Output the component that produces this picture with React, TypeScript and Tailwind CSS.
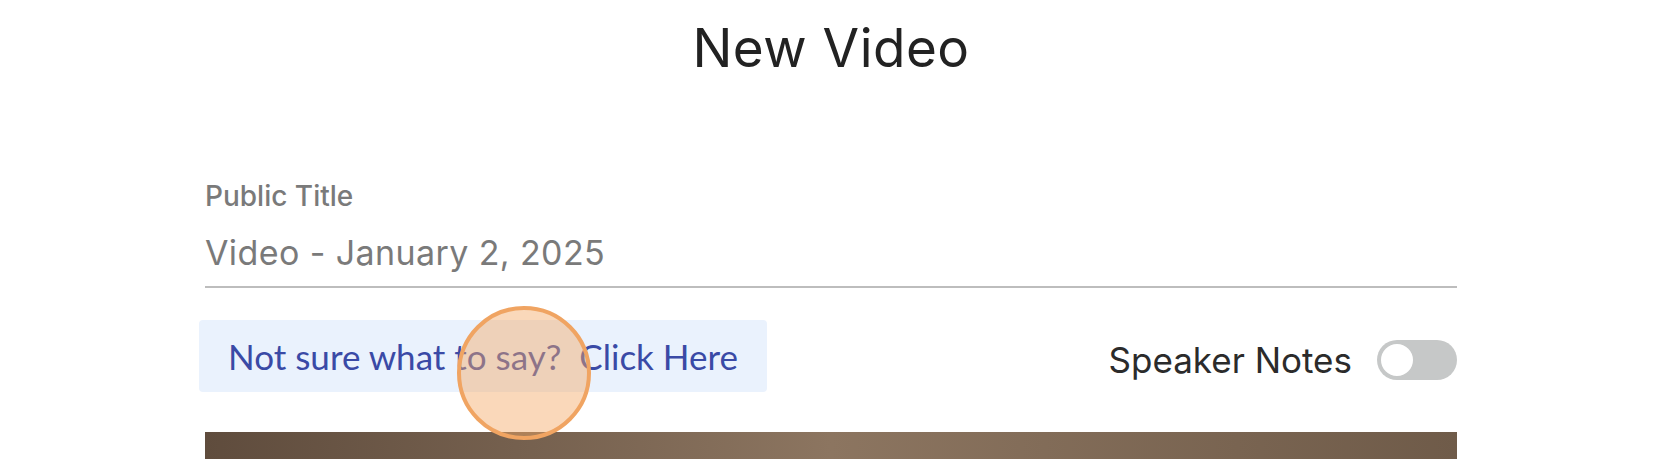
import React from "react";

export default function App() {
  return (
    <div className="relative w-[1654px] h-[460px] overflow-hidden bg-white" style={{ fontFamily: "Inter, 'Noto Sans', sans-serif" }}>
      <div className="ml-[205px] w-[1252px] flex flex-col">
        <h1 className="text-center text-[53px] leading-[60px] pt-[18px] text-[#222222] font-normal tracking-[0.5px]">New Video</h1>
        <div className="mt-[101px] text-[28px] leading-[34px] font-medium text-[#7a7a7a]">Public Title</div>
        <div className="mt-[20px] text-[34px] leading-[40px] text-[#7a7a7a] tracking-[0.4px]">Video - January 2, 2025</div>
        <div className="mt-[13px] h-[2px] bg-[#bdbdbd]" />
        <div className="mt-[32px] flex items-center justify-between">
          <div
            className="-ml-[6px] w-[568px] h-[72px] rounded-[4px] bg-[#eaf2fd] flex items-center pl-[29px] text-[35px] text-[#3a4aa6]"
            style={{ fontFamily: "Lato, 'Noto Sans', sans-serif" }}
          >
            Not sure what to say?&nbsp;&nbsp;Click Here
          </div>
          <div className="flex items-center gap-[25px] mt-[8px]">
            <span className="text-[35px] text-[#2b2b2b]">Speaker Notes</span>
            <div className="relative w-[80px] h-[40px] rounded-full bg-[#c6c8c8]">
              <div className="absolute left-[2px] top-[2px] w-[36px] h-[36px] rounded-full bg-white border-[2px] border-[#c6c8c8]" />
            </div>
          </div>
        </div>
        <div className="mt-[40px] h-[27px] bg-gradient-to-r from-[#5f4c3d] via-[#8c7560] to-[#6f5b49]" />
      </div>
      <div className="absolute left-[457px] top-[306px] w-[134px] h-[134px] rounded-full bg-[#f5a867]/45 border-[4px] border-[#f0a462]" />
    </div>
  );
}
